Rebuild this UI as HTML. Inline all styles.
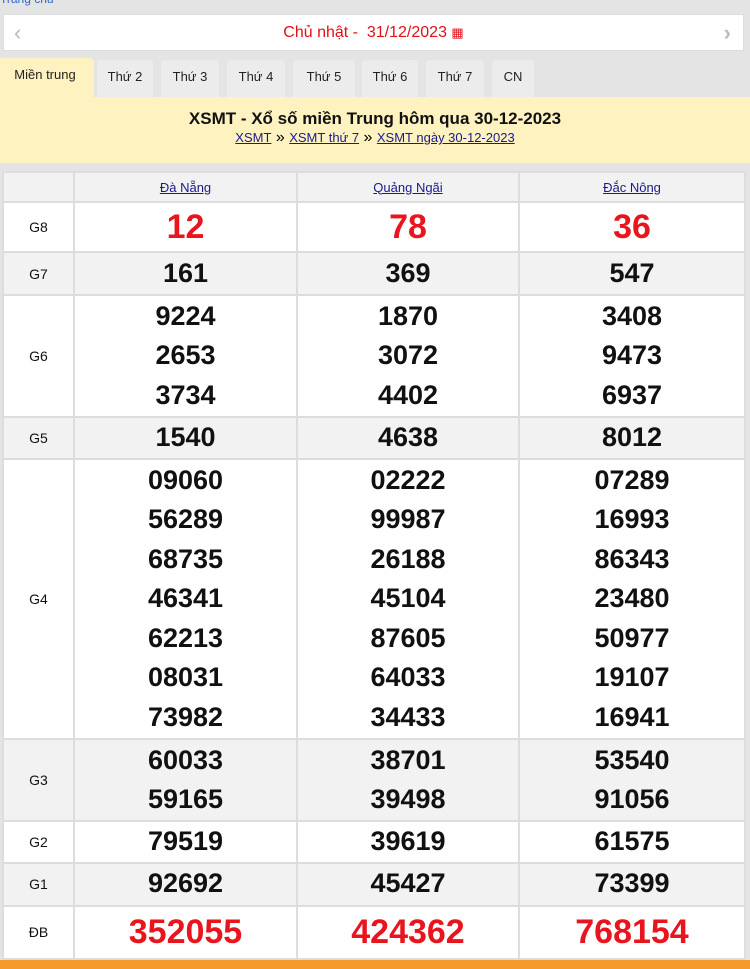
<!DOCTYPE html>
<html><head><meta charset="utf-8"><style>
body{margin:0;width:750px;height:969px;background:#e4e4e4;font-family:"Liberation Sans",Arial,sans-serif;position:relative;overflow:hidden}
.top{position:absolute;left:0;top:-8px;font-size:12px;color:#36c}
.date{position:absolute;left:3px;top:14px;width:739px;height:35px;background:#fff;border:1px solid #ddd;text-align:center;line-height:35px;color:#e0101a;font-size:16px}
.date .l,.date .r{position:absolute;top:0;color:#bbb;font-size:22px}
.date .l{left:10px}.date .r{right:12px}
.tabs{position:absolute;left:0;top:58px;height:40px;width:750px}
.tab{position:absolute;top:2px;height:38px;background:#ececec;font-size:13px;line-height:34px;text-align:center;border-radius:4px 4px 0 0;color:#222}
.tab.a{background:#fdf2c0;top:0;height:40px}
.ban{position:absolute;left:0;top:97px;width:750px;height:66px;background:#fdf2c0;text-align:center}
.ban b{display:block;font-size:17px;margin-top:12px;color:#111}
.ban a{font-size:13px;color:#1a1a8c;text-decoration:underline}
table{position:absolute;left:2px;top:171px;border-collapse:collapse;background:#fff;table-layout:fixed;width:742px}
td{border:2px solid #ddd;text-align:center;padding:0;color:#111}
td.g{font-size:14px}
.h td{height:28px;background:#f2f2f2;font-size:13px}
.h a{color:#1a1a8c;text-decoration:underline}
.gr td{background:#f2f2f2}
.n{font-size:27px;font-weight:bold;line-height:39.5px}
.r{color:#e8141e;font-size:34px;font-weight:bold}
.bot{position:absolute;left:0;top:960px;width:750px;height:9px;background:#f59a2a}
</style></head><body>
<div class="top">Trang chu</div>
<div class="date"><span class="l">‹</span>Chủ nhật - &nbsp;31/12/2023 <span style="font-size:13px">▦</span><span class="r">›</span></div>
<div class="tabs">
<div class="tab a" style="left:-4px;width:98px">Miền trung</div>
<div class="tab" style="left:97px;width:56px">Thứ 2</div>
<div class="tab" style="left:161px;width:58px">Thứ 3</div>
<div class="tab" style="left:227px;width:58px">Thứ 4</div>
<div class="tab" style="left:293px;width:62px">Thứ 5</div>
<div class="tab" style="left:362px;width:56px">Thứ 6</div>
<div class="tab" style="left:426px;width:58px">Thứ 7</div>
<div class="tab" style="left:492px;width:42px">CN</div>
</div>
<div class="ban"><b>XSMT - Xổ số miền Trung hôm qua 30-12-2023</b><a>XSMT</a> » <a>XSMT thứ 7</a> » <a>XSMT ngày 30-12-2023</a></div>
<table>
<colgroup><col style="width:71px"><col style="width:223px"><col style="width:222px"><col style="width:226px"></colgroup>
<tr class="h"><td class="g"></td><td><a>Đà Nẵng</a></td><td><a>Quảng Ngãi</a></td><td><a>Đắc Nông</a></td></tr>
<tr style="height:50px"><td class="g">G8</td><td class="r">12</td><td class="r">78</td><td class="r">36</td></tr>
<tr class="gr" style="height:43px"><td class="g">G7</td><td class="n">161</td><td class="n">369</td><td class="n">547</td></tr>
<tr style="height:122px"><td class="g">G6</td><td class="n">9224<br>2653<br>3734</td><td class="n">1870<br>3072<br>4402</td><td class="n">3408<br>9473<br>6937</td></tr>
<tr class="gr" style="height:42px"><td class="g">G5</td><td class="n">1540</td><td class="n">4638</td><td class="n">8012</td></tr>
<tr style="height:280px"><td class="g">G4</td><td class="n">09060<br>56289<br>68735<br>46341<br>62213<br>08031<br>73982</td><td class="n">02222<br>99987<br>26188<br>45104<br>87605<br>64033<br>34433</td><td class="n">07289<br>16993<br>86343<br>23480<br>50977<br>19107<br>16941</td></tr>
<tr class="gr" style="height:82px"><td class="g">G3</td><td class="n">60033<br>59165</td><td class="n">38701<br>39498</td><td class="n">53540<br>91056</td></tr>
<tr style="height:40px"><td class="g">G2</td><td class="n">79519</td><td class="n">39619</td><td class="n">61575</td></tr>
<tr class="gr" style="height:43px"><td class="g">G1</td><td class="n">92692</td><td class="n">45427</td><td class="n">73399</td></tr>
<tr style="height:53px"><td class="g">ĐB</td><td class="r">352055</td><td class="r">424362</td><td class="r">768154</td></tr>
</table>
<div class="bot"></div>
</body></html>
